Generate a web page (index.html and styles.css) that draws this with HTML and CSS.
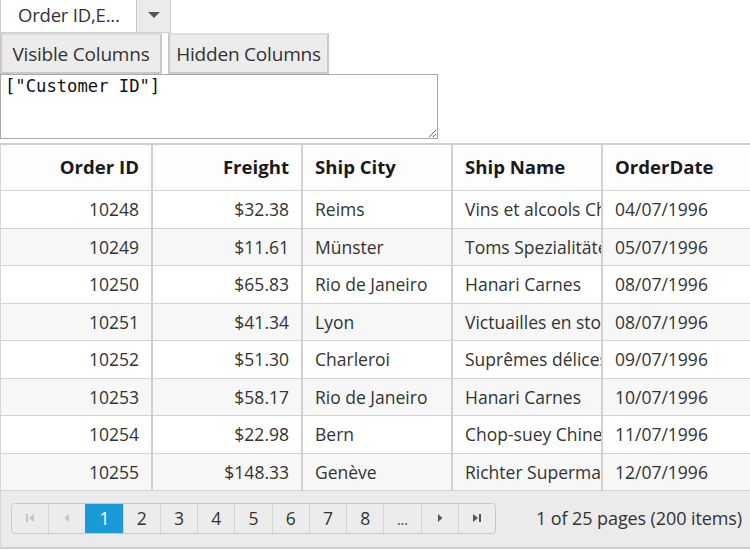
FILE: index.html
```html
<!DOCTYPE html>
<html>
<head>
<meta charset="utf-8">
<link rel="stylesheet" href="styles.css">
</head>
<body>
<div class="page">
  <div class="dropdown">
    <span class="dd-text">Order ID,E...</span>
    <span class="dd-arrow"><svg width="14" height="8" viewBox="0 0 14 8"><path d="M1 1 L13 1 L7 7 Z" fill="#555"/></svg></span>
  </div>
  <div class="btnrow">
    <button class="btn">Visible Columns</button>
    <button class="btn">Hidden Columns</button>
  </div>
  <textarea class="ta" readonly>["Customer ID"]</textarea>
  <div class="grid">
    <div class="row head">
      <div class="cell r">Order ID</div>
      <div class="cell r">Freight</div>
      <div class="cell">Ship City</div>
      <div class="cell">Ship Name</div>
      <div class="cell">OrderDate</div>
    </div>
    <div class="row"><div class="cell r">10248</div><div class="cell r">$32.38</div><div class="cell">Reims</div><div class="cell">Vins et alcools Chevalier</div><div class="cell">04/07/1996</div></div>
    <div class="row alt"><div class="cell r">10249</div><div class="cell r">$11.61</div><div class="cell">Münster</div><div class="cell">Toms Spezialitäten</div><div class="cell">05/07/1996</div></div>
    <div class="row"><div class="cell r">10250</div><div class="cell r">$65.83</div><div class="cell">Rio de Janeiro</div><div class="cell">Hanari Carnes</div><div class="cell">08/07/1996</div></div>
    <div class="row alt"><div class="cell r">10251</div><div class="cell r">$41.34</div><div class="cell">Lyon</div><div class="cell">Victuailles en stock</div><div class="cell">08/07/1996</div></div>
    <div class="row"><div class="cell r">10252</div><div class="cell r">$51.30</div><div class="cell">Charleroi</div><div class="cell">Suprêmes délices</div><div class="cell">09/07/1996</div></div>
    <div class="row alt"><div class="cell r">10253</div><div class="cell r">$58.17</div><div class="cell">Rio de Janeiro</div><div class="cell">Hanari Carnes</div><div class="cell">10/07/1996</div></div>
    <div class="row"><div class="cell r">10254</div><div class="cell r">$22.98</div><div class="cell">Bern</div><div class="cell">Chop-suey Chinese</div><div class="cell">11/07/1996</div></div>
    <div class="row alt"><div class="cell r">10255</div><div class="cell r">$148.33</div><div class="cell">Genève</div><div class="cell">Richter Supermarkt</div><div class="cell">12/07/1996</div></div>
    <div class="pager">
      <div class="pg-group">
        <span class="pg dis"><svg width="10" height="10" viewBox="0 0 10 10"><rect x="1" y="1" width="2" height="8" fill="#c4c4c4"/><path d="M9 1 L9 9 L4 5 Z" fill="#c4c4c4"/></svg></span>
        <span class="pg dis"><svg width="6" height="10" viewBox="0 0 6 10"><path d="M5 1 L5 9 L0.5 5 Z" fill="#c4c4c4"/></svg></span>
        <span class="pg active">1</span>
        <span class="pg">2</span>
        <span class="pg">3</span>
        <span class="pg">4</span>
        <span class="pg">5</span>
        <span class="pg">6</span>
        <span class="pg">7</span>
        <span class="pg">8</span>
        <span class="pg dots">...</span>
        <span class="pg"><svg width="6" height="10" viewBox="0 0 6 10"><path d="M1 1 L1 9 L5.5 5 Z" fill="#555"/></svg></span>
        <span class="pg"><svg width="10" height="10" viewBox="0 0 10 10"><path d="M1 1 L1 9 L6 5 Z" fill="#555"/><rect x="7" y="1" width="2" height="8" fill="#555"/></svg></span>
      </div>
      <div class="pg-info">1 of 25 pages (200 items)</div>
    </div>
  </div>
</div>
</body>
</html>
```

FILE: styles.css
```css
* { box-sizing: border-box; }
html, body { margin: 0; padding: 0; background: #fff; }
body {
  font-family: "Open Sans", "Noto Sans", sans-serif;
  font-size: 17.5px;
  color: #333;
  width: 750px;
  height: 550px;
  overflow: hidden;
}
.page { display: flex; flex-direction: column; width: 750px; }

.dropdown {
  display: flex;
  width: 171px;
  height: 33px;
}
.dd-text {
  width: 137px;
  border: 1px solid #cfcfcf;
  border-top: none;
  border-right: 1px solid #c8c8c8;
  background: #fff;
  padding: 2px 0 0 17px;
  line-height: 26px;
  font-size: 18.5px;
  letter-spacing: -0.2px;
  color: #333;
  white-space: nowrap;
  overflow: hidden;
}
.dd-arrow {
  width: 34px;
  background: #ebebeb;
  border: 1px solid #cfcfcf;
  border-top: none;
  border-left: none;
  display: flex;
  align-items: center;
  justify-content: center;
  padding-bottom: 2px;
}

.btnrow { display: flex; gap: 6px; height: 41px; }
.btn {
  font-family: inherit;
  font-size: 19px;
  letter-spacing: -0.2px;
  color: #333;
  background: #ececec;
  border: 2px solid #c9c9c9;
  border-top-color: #dcdcdc;
  height: 41px;
  padding: 0 2px;
  margin: 0;
  border-radius: 0;
  white-space: nowrap;
}
.btn:first-child { width: 162px; }
.btn:last-child { width: 161px; }

.ta {
  width: 438px;
  height: 65px;
  margin: 0;
  border: 1px solid #a9a9a9;
  padding: 1px 4px;
  font-family: "DejaVu Sans Mono", monospace;
  font-size: 17.2px;
  color: #111;
  resize: both;
  outline: none;
  display: block;
}

.grid {
  margin-top: 4px;
  border-top: 2px solid #cfcfcf;
  border-left: 1px solid #d6d6d6;
  width: 750px;
  overflow: hidden;
}
.row {
  display: grid;
  grid-template-columns: 152px 150px 150px 150px 160px;
  height: 37.5px;
  border-bottom: 1.5px solid #d3d3d3;
  background: #fff;
}
.row.alt { background: #f7f7f7; }
.row.head { height: 46px; background: #fdfdfd; }
.cell {
  border-right: 2px solid #d0d0d0;
  padding: 0 12px;
  white-space: nowrap;
  overflow: hidden;
  display: flex;
  align-items: center;
  color: #333;
}
.cell.r { justify-content: flex-end; }
.head .cell { font-weight: bold; color: #1a1a1a; padding-bottom: 2px; font-size: 18.6px; }

.pager {
  height: 58px;
  background: #ebebeb;
  border-bottom: 2px solid #cfcfcf;
  display: flex;
  align-items: center;
  padding: 0 8px 0 10px;
  justify-content: space-between;
}
.pg-group {
  display: flex;
  width: 485px;
  height: 31px;
  border: 1px solid #c8c8c8;
  border-radius: 4px;
  overflow: hidden;
  margin-bottom: 2px;
}
.pg {
  flex: 1;
  display: flex;
  align-items: center;
  justify-content: center;
  border-left: 1px solid #d4d4d4;
  background: #ececec;
  color: #333;
  font-size: 17.5px;
}
.pg:first-child { border-left: none; }
.pg.active { background: #1a9bd7; color: #fff; border-left-color: #1a9bd7; }
.pg.dots { font-size: 14px; padding-top: 2px; }
.pg-info { font-size: 18px; color: #333; margin-bottom: 2px; letter-spacing: -0.1px; }
```
